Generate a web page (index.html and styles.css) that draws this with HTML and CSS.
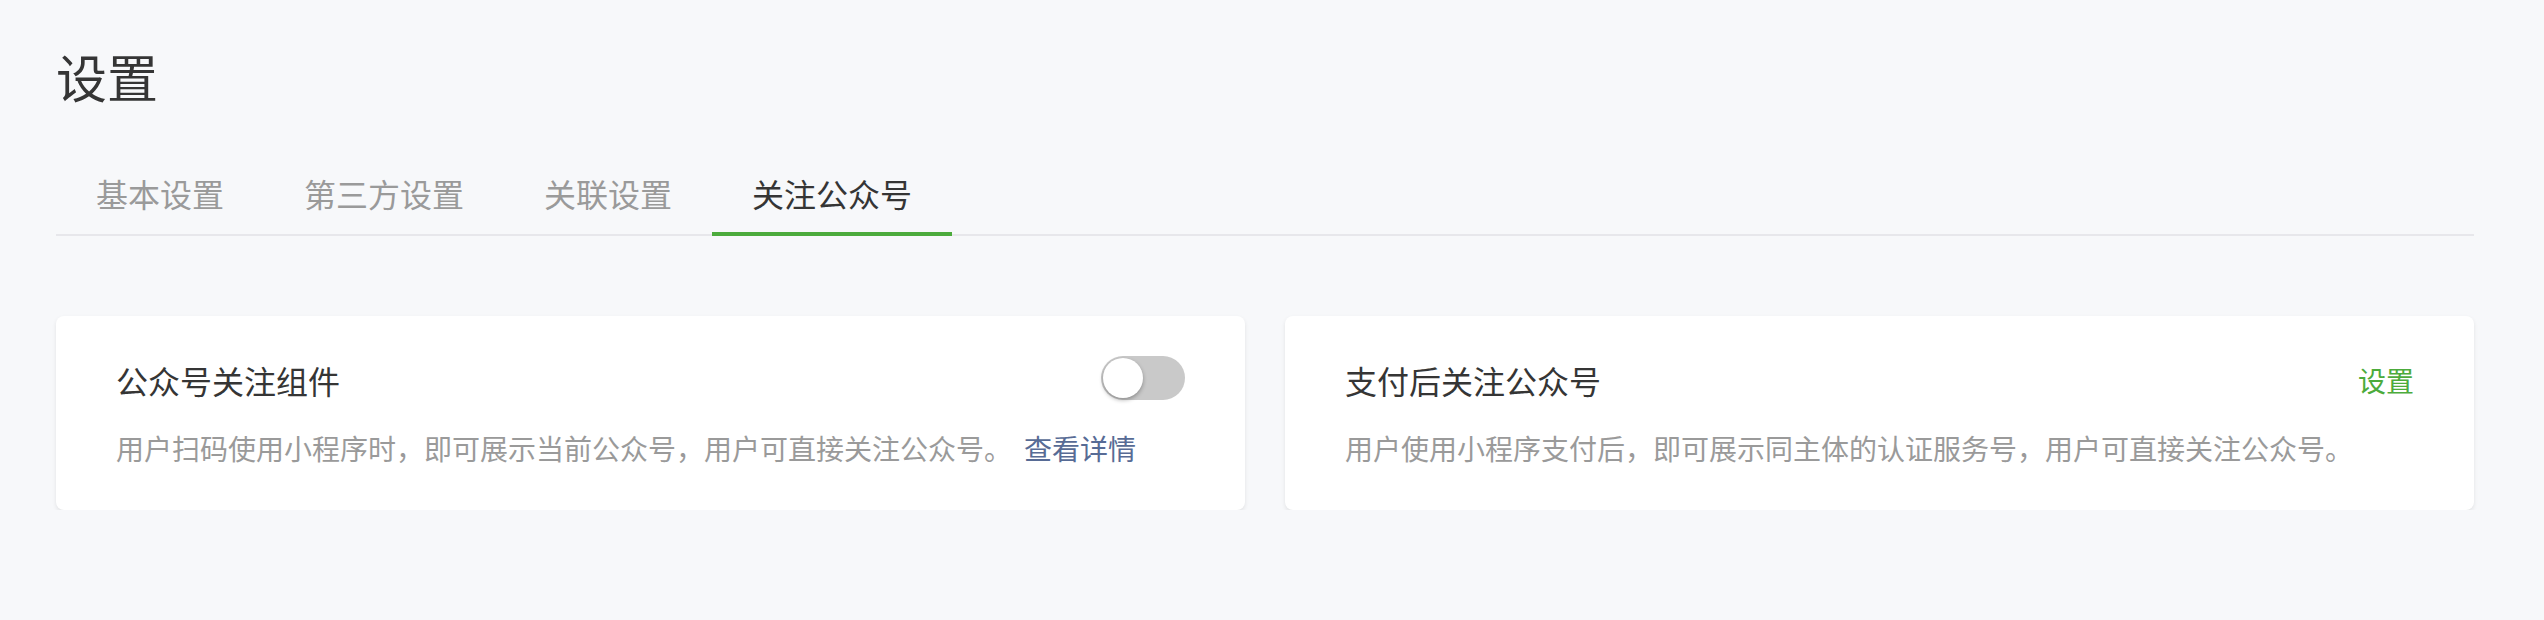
FILE: index.html
```html
<!DOCTYPE html>
<html lang="zh-CN">
<head>
<meta charset="utf-8">
<title>设置</title>
<link rel="stylesheet" href="styles.css">
</head>
<body>
<div class="page">
  <h1 class="page-title">设置</h1>
  <nav class="tabs">
    <a class="tab">基本设置</a>
    <a class="tab">第三方设置</a>
    <a class="tab">关联设置</a>
    <a class="tab tab-active">关注公众号</a>
  </nav>
  <div class="cards">
    <section class="card">
      <div class="card-head">
        <h2 class="card-title">公众号关注组件</h2>
        <span class="switch"><span class="switch-knob"></span></span>
      </div>
      <p class="card-desc">用户扫码使用小程序时，即可展示当前公众号，用户可直接关注公众号。<a class="link">查看详情</a></p>
    </section>
    <section class="card">
      <div class="card-head">
        <h2 class="card-title">支付后关注公众号</h2>
        <a class="action">设置</a>
      </div>
      <p class="card-desc">用户使用小程序支付后，即可展示同主体的认证服务号，用户可直接关注公众号。</p>
    </section>
  </div>
</div>
</body>
</html>
```

FILE: styles.css
```css
* { box-sizing: border-box; }
html, body {
  margin: 0;
  background: #f7f8fa;
}
body {
  font-family: "Noto Sans CJK SC", "Noto Sans", sans-serif;
  color: #353535;
}
.page {
  padding: 44px 70px 0 56px;
}
.page-title {
  margin: 0;
  font-size: 51px;
  line-height: 64px;
  font-weight: 400;
  color: #353535;
}
.tabs {
  display: flex;
  margin-top: 63px;
  border-bottom: 2px solid #e7e7eb;
}
.tab {
  position: relative;
  padding: 0 40px 19px;
  font-size: 32px;
  line-height: 44px;
  color: #9a9a9a;
  cursor: pointer;
}
.tab-active {
  color: #353535;
}
.tab-active::after {
  content: "";
  position: absolute;
  left: 0;
  right: 0;
  bottom: -2px;
  height: 4px;
  background: #4cab3c;
}
.cards {
  display: grid;
  grid-template-columns: 1fr 1fr;
  gap: 40px;
  margin-top: 80px;
}
.card {
  background: #fff;
  border-radius: 8px;
  box-shadow: 0 2px 4px rgba(0, 0, 0, 0.09);
  padding: 40px 60px 42px;
}
.card-head {
  display: flex;
  align-items: center;
  justify-content: space-between;
  height: 48px;
}
.card-title {
  margin: 0;
  font-size: 32px;
  line-height: 48px;
  font-weight: 400;
  color: #353535;
}
.card-desc {
  margin: 24px 0 0;
  font-size: 28px;
  line-height: 40px;
  color: #9a9a9a;
  white-space: nowrap;
}
.link {
  margin-left: 12px;
  color: #576b95;
  cursor: pointer;
}
.action {
  font-size: 28px;
  line-height: 40px;
  color: #4cab3c;
  cursor: pointer;
}
.switch {
  display: flex;
  align-items: center;
  width: 84px;
  height: 44px;
  border-radius: 22px;
  background: #c9c9c9;
  padding: 2px;
  margin-top: -4px;
}
.switch-knob {
  width: 40px;
  height: 40px;
  border-radius: 50%;
  background: #fff;
  box-shadow: 0 2px 4px rgba(0, 0, 0, 0.3);
}
```
